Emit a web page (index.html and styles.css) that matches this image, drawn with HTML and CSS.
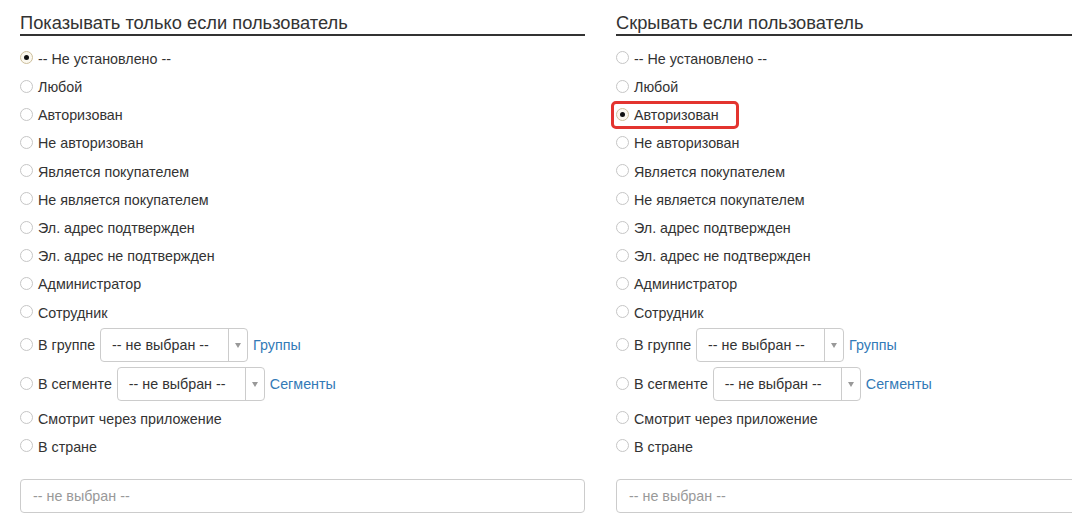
FILE: index.html
```html
<!DOCTYPE html>
<html lang="ru">
<head>
<meta charset="utf-8">
<title>Условия показа</title>
<link rel="stylesheet" href="styles.css">
</head>
<body>
<div class="page">
  <section class="col">
    <h3 class="col-title">Показывать только если пользователь</h3>
    <ul class="opts">
      <li class="opt"><span class="radio checked"></span><span class="lbl">-- Не установлено --</span></li>
      <li class="opt"><span class="radio"></span><span class="lbl">Любой</span></li>
      <li class="opt"><span class="radio"></span><span class="lbl">Авторизован</span></li>
      <li class="opt"><span class="radio"></span><span class="lbl">Не авторизован</span></li>
      <li class="opt"><span class="radio"></span><span class="lbl">Является покупателем</span></li>
      <li class="opt"><span class="radio"></span><span class="lbl">Не является покупателем</span></li>
      <li class="opt"><span class="radio"></span><span class="lbl">Эл. адрес подтвержден</span></li>
      <li class="opt"><span class="radio"></span><span class="lbl">Эл. адрес не подтвержден</span></li>
      <li class="opt"><span class="radio"></span><span class="lbl">Администратор</span></li>
      <li class="opt"><span class="radio"></span><span class="lbl">Сотрудник</span></li>
      <li class="opt opt-select"><span class="radio"></span><span class="lbl">В группе</span>
        <span class="select"><span class="select-val">-- не выбран --</span><span class="select-arrow"></span></span>
        <a class="link" href="#">Группы</a></li>
      <li class="opt opt-select"><span class="radio"></span><span class="lbl">В сегменте</span>
        <span class="select"><span class="select-val">-- не выбран --</span><span class="select-arrow"></span></span>
        <a class="link" href="#">Сегменты</a></li>
      <li class="opt"><span class="radio"></span><span class="lbl">Смотрит через приложение</span></li>
      <li class="opt"><span class="radio"></span><span class="lbl">В стране</span></li>
    </ul>
    <div class="field">-- не выбран --</div>
  </section>
  <section class="col">
    <h3 class="col-title">Скрывать если пользователь</h3>
    <ul class="opts">
      <li class="opt"><span class="radio"></span><span class="lbl">-- Не установлено --</span></li>
      <li class="opt"><span class="radio"></span><span class="lbl">Любой</span></li>
      <li class="opt highlight"><span class="radio checked"></span><span class="lbl">Авторизован</span></li>
      <li class="opt"><span class="radio"></span><span class="lbl">Не авторизован</span></li>
      <li class="opt"><span class="radio"></span><span class="lbl">Является покупателем</span></li>
      <li class="opt"><span class="radio"></span><span class="lbl">Не является покупателем</span></li>
      <li class="opt"><span class="radio"></span><span class="lbl">Эл. адрес подтвержден</span></li>
      <li class="opt"><span class="radio"></span><span class="lbl">Эл. адрес не подтвержден</span></li>
      <li class="opt"><span class="radio"></span><span class="lbl">Администратор</span></li>
      <li class="opt"><span class="radio"></span><span class="lbl">Сотрудник</span></li>
      <li class="opt opt-select"><span class="radio"></span><span class="lbl">В группе</span>
        <span class="select"><span class="select-val">-- не выбран --</span><span class="select-arrow"></span></span>
        <a class="link" href="#">Группы</a></li>
      <li class="opt opt-select"><span class="radio"></span><span class="lbl">В сегменте</span>
        <span class="select"><span class="select-val">-- не выбран --</span><span class="select-arrow"></span></span>
        <a class="link" href="#">Сегменты</a></li>
      <li class="opt"><span class="radio"></span><span class="lbl">Смотрит через приложение</span></li>
      <li class="opt"><span class="radio"></span><span class="lbl">В стране</span></li>
    </ul>
    <div class="field">-- не выбран --</div>
  </section>
</div>
</body>
</html>
```

FILE: styles.css
```css
html, body {
  margin: 0;
  padding: 0;
  background: #fff;
}
body {
  font-family: "Liberation Sans", Arial, sans-serif;
  font-size: 14.3px;
  color: #333;
  overflow: hidden;
}
.page {
  display: grid;
  grid-template-columns: 565px 565px;
  column-gap: 31px;
  padding-left: 20px;
  width: 1052px;
  overflow: hidden;
}
.col-title {
  margin: 13px 0 0;
  font-size: 18.3px;
  font-weight: normal;
  line-height: 20px;
  padding-bottom: 1px;
  border-bottom: 2px solid #333;
  color: #333;
  white-space: nowrap;
}
.opts {
  list-style: none;
  margin: 8.8px 0 0;
  padding: 0;
}
.opt {
  display: flex;
  align-items: center;
  height: 28.2px;
  line-height: 20px;
}
.opt-select {
  height: auto;
  padding: 1.5px 0 3.5px;
}
.radio {
  box-sizing: border-box;
  width: 13px;
  height: 13px;
  border-radius: 50%;
  border: 1px solid #c6c6c6;
  background: #fff;
  margin-right: 5px;
  margin-top: -2px;
  flex: none;
  display: flex;
  align-items: center;
  justify-content: center;
}
.radio.checked {
  border-color: #cdbf9c;
  background: #fbf8ef;
}
.radio.checked::after {
  content: "";
  width: 5px;
  height: 5px;
  border-radius: 50%;
  background: #111;
}
.lbl {
  white-space: nowrap;
}
.select {
  box-sizing: border-box;
  display: flex;
  align-items: stretch;
  height: 34px;
  width: 148px;
  margin-left: 5px;
  border: 1px solid #ccc;
  border-radius: 4px;
  background: #fff;
  flex: none;
}
.select-val {
  flex: 1;
  padding-left: 11px;
  line-height: 32px;
  white-space: nowrap;
  color: #333;
}
.select-arrow {
  width: 18px;
  border-left: 1px solid #ccc;
  display: flex;
  align-items: center;
  justify-content: center;
}
.select-arrow::after {
  content: "";
  width: 0;
  height: 0;
  border-left: 3px solid transparent;
  border-right: 3px solid transparent;
  border-top: 5px solid #999;
}
.link {
  margin-left: 5px;
  color: #337ab7;
  text-decoration: none;
  white-space: nowrap;
}
.field {
  box-sizing: border-box;
  margin-top: 17.5px;
  height: 34px;
  border: 1px solid #ccc;
  border-radius: 4px;
  padding-left: 12px;
  line-height: 32px;
  color: #999;
}
.highlight {
  position: relative;
}
.highlight::after {
  content: "";
  position: absolute;
  left: -5px;
  top: 0;
  width: 128px;
  height: 28px;
  box-sizing: border-box;
  border: 3px solid #e3342f;
  border-radius: 5px;
}
```
